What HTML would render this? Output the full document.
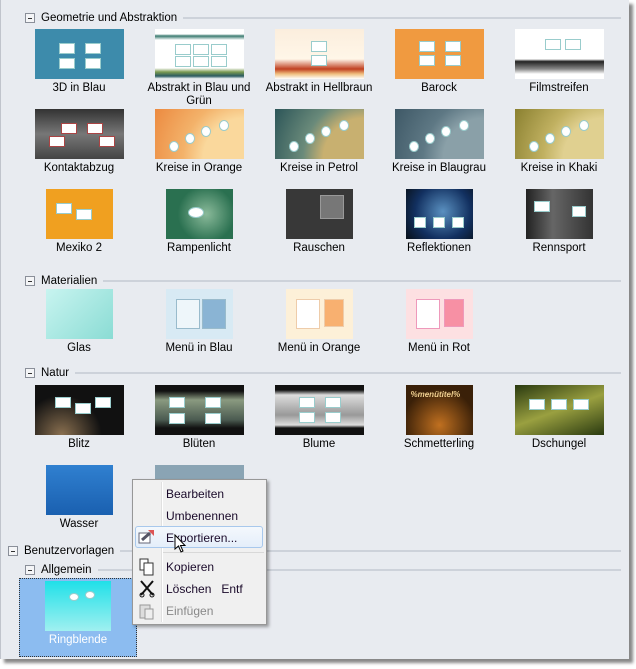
<!DOCTYPE html><html><head><meta charset="utf-8"><style>
body{margin:0;width:636px;height:669px;background:#fff;position:relative;overflow:hidden;font-family:"Liberation Sans",sans-serif;font-size:11.5px;color:#000}
#panel{position:absolute;left:0;top:0;width:628px;height:659px;background:#e8ebf0;box-shadow:4px 4px 3px #888;border-left:1px solid #c0c4cc}
.h{position:absolute;height:14px;display:flex;align-items:center;right:8px}
.h .b{width:8px;height:8px;border:1px solid #8a8f99;background:#f4f5f7;position:relative;margin-right:6px;flex:none}
.h .b:after{content:"";position:absolute;left:2px;top:4px;width:4px;height:1px;background:#333}
.h .l{flex:1;height:2px;background:#cdd2da;margin-left:6px}
.it{position:absolute;width:116px;text-align:center;line-height:13px}
.t{margin:0 auto 3px;height:50px;position:relative;overflow:hidden}
.t i{position:absolute;background:#fff;width:14px;height:9px;border:1px solid #9cc}
#menu{position:absolute;left:131px;top:479px;width:133px;height:144px;background:#f0f0f0;border:1px solid #979797;box-shadow:2px 2px 3px rgba(0,0,0,.35)}
#menu .sep{position:absolute;left:28px;top:2px;bottom:2px;width:1px;background:#e0e0e0;border-right:1px solid #fff}
.mi{position:absolute;left:33px;font-size:12px;color:#1a0a2a}
</style></head><body><div id="panel">
<div class="h" style="left:24px;top:11px"><span class="b"></span>Geometrie und Abstraktion<span class="l"></span></div>
<div class="h" style="left:24px;top:274px"><span class="b"></span>Materialien<span class="l"></span></div>
<div class="h" style="left:24px;top:366px"><span class="b"></span>Natur<span class="l"></span></div>
<div class="h" style="left:7px;top:544px"><span class="b"></span>Benutzervorlagen<span class="l"></span></div>
<div class="h" style="left:24px;top:563px"><span class="b"></span>Allgemein<span class="l"></span></div>

<div class="it" style="left:20px;top:29px"><div class="t" style="width:89px;background:#3d8bab"><i style="left:24px;top:14px"></i><i style="left:50px;top:14px"></i><i style="left:24px;top:29px"></i><i style="left:50px;top:29px"></i></div>3D in Blau</div>
<div class="it" style="left:140px;top:29px"><div class="t" style="width:89px;background:linear-gradient(#fff 0,#fff 10%,#3a7a70 14%,#fff 22%,#fff 78%,#7a9a50 86%,#2a5a60 94%,#fff)"><i style="left:20px;top:15px"></i><i style="left:38px;top:15px"></i><i style="left:56px;top:15px"></i><i style="left:20px;top:27px"></i><i style="left:38px;top:27px"></i><i style="left:56px;top:27px"></i></div>Abstrakt in Blau und Grün</div>
<div class="it" style="left:260px;top:29px"><div class="t" style="width:89px;background:linear-gradient(#fbeedd 0,#fff6e8 60%,#c04020 80%,#f0c080 90%,#fff)"><i style="left:36px;top:12px"></i><i style="left:36px;top:26px"></i></div>Abstrakt in Hellbraun</div>
<div class="it" style="left:380px;top:29px"><div class="t" style="width:89px;background:#f09a40"><i style="left:24px;top:12px"></i><i style="left:50px;top:12px"></i><i style="left:24px;top:26px"></i><i style="left:50px;top:26px"></i></div>Barock</div>
<div class="it" style="left:500px;top:29px"><div class="t" style="width:89px;background:linear-gradient(#fff 0,#fff 60%,#222 65%,#888 80%,#fff 90%)"><i style="left:30px;top:10px"></i><i style="left:50px;top:10px"></i></div>Filmstreifen</div>

<div class="it" style="left:20px;top:109px"><div class="t" style="width:89px;background:linear-gradient(#333,#777 50%,#444)"><i style="left:26px;top:14px;border-color:#a44"></i><i style="left:52px;top:14px;border-color:#a44"></i><i style="left:14px;top:27px;border-color:#a44"></i><i style="left:64px;top:27px;border-color:#a44"></i></div>Kontaktabzug</div>
<div class="it" style="left:140px;top:109px"><div class="t" style="width:89px;background:radial-gradient(circle at 100% 100%,#fad89c 40%,#f3b26a 60%,#ec8a40)"><i style="left:14px;top:32px;border-radius:50%;width:8px"></i><i style="left:30px;top:24px;border-radius:50%;width:8px"></i><i style="left:46px;top:17px;border-radius:50%;width:8px"></i><i style="left:64px;top:11px;border-radius:50%;width:8px"></i></div>Kreise in Orange</div>
<div class="it" style="left:260px;top:109px"><div class="t" style="width:89px;background:radial-gradient(circle at 100% 100%,#c8b070 40%,#6a8a7a 60%,#2c5558)"><i style="left:14px;top:32px;border-radius:50%;width:8px"></i><i style="left:30px;top:24px;border-radius:50%;width:8px"></i><i style="left:46px;top:17px;border-radius:50%;width:8px"></i><i style="left:64px;top:11px;border-radius:50%;width:8px"></i></div>Kreise in Petrol</div>
<div class="it" style="left:380px;top:109px"><div class="t" style="width:89px;background:radial-gradient(circle at 100% 100%,#8aa0a8 40%,#5e7884 60%,#3e5866)"><i style="left:14px;top:32px;border-radius:50%;width:8px"></i><i style="left:30px;top:24px;border-radius:50%;width:8px"></i><i style="left:46px;top:17px;border-radius:50%;width:8px"></i><i style="left:64px;top:11px;border-radius:50%;width:8px"></i></div>Kreise in Blaugrau</div>
<div class="it" style="left:500px;top:109px"><div class="t" style="width:89px;background:radial-gradient(circle at 100% 100%,#e0d090 40%,#c0b060 60%,#8a8030)"><i style="left:14px;top:32px;border-radius:50%;width:8px"></i><i style="left:30px;top:24px;border-radius:50%;width:8px"></i><i style="left:46px;top:17px;border-radius:50%;width:8px"></i><i style="left:64px;top:11px;border-radius:50%;width:8px"></i></div>Kreise in Khaki</div>

<div class="it" style="left:20px;top:189px"><div class="t" style="width:67px;background:#f0a020"><i style="left:10px;top:14px"></i><i style="left:30px;top:20px"></i></div>Mexiko 2</div>
<div class="it" style="left:140px;top:189px"><div class="t" style="width:67px;background:radial-gradient(circle at 60% 50%,#8aba9a,#2a7050 60%)"><i style="left:22px;top:18px;border-radius:50%"></i></div>Rampenlicht</div>
<div class="it" style="left:260px;top:189px"><div class="t" style="width:67px;background:#383838"><i style="left:34px;top:6px;width:22px;height:22px;background:#777;border-color:#999"></i></div>Rauschen</div>
<div class="it" style="left:380px;top:189px"><div class="t" style="width:67px;background:radial-gradient(circle at 55% 45%,#5a90c0,#123060 60%,#081018)"><i style="left:8px;top:28px;width:10px"></i><i style="left:27px;top:28px;width:10px"></i><i style="left:46px;top:28px;width:10px"></i></div>Reflektionen</div>
<div class="it" style="left:500px;top:189px"><div class="t" style="width:67px;background:linear-gradient(90deg,#222,#666 40%,#333)"><i style="left:8px;top:12px"></i><i style="left:46px;top:17px;width:12px"></i></div>Rennsport</div>

<div class="it" style="left:20px;top:289px"><div class="t" style="width:67px;background:linear-gradient(135deg,#c8f4f0,#8adcd4)"></div>Glas</div>
<div class="it" style="left:140px;top:289px"><div class="t" style="width:67px;background:#d8eaf4"><i style="left:10px;top:10px;width:22px;height:28px;background:#eef6fa;border-color:#9bc"></i><i style="left:36px;top:10px;width:22px;height:28px;background:#8ab4d4;border-color:#9bc"></i></div>Menü in Blau</div>
<div class="it" style="left:260px;top:289px"><div class="t" style="width:67px;background:#fdf0d8"><i style="left:10px;top:10px;width:22px;height:28px;background:#fff;border-color:#eca"></i><i style="left:38px;top:10px;width:18px;height:26px;background:#f8b070;border-color:#eca"></i></div>Menü in Orange</div>
<div class="it" style="left:380px;top:289px"><div class="t" style="width:67px;background:#fde0e2"><i style="left:10px;top:10px;width:22px;height:28px;background:#fff;border-color:#e9b"></i><i style="left:38px;top:10px;width:18px;height:26px;background:#f790a4;border-color:#e9b"></i></div>Menü in Rot</div>

<div class="it" style="left:20px;top:385px"><div class="t" style="width:89px;background:radial-gradient(circle at 30% 100%,#8a7050,#111 50%)"><i style="left:20px;top:12px"></i><i style="left:40px;top:18px"></i><i style="left:60px;top:12px"></i></div>Blitz</div>
<div class="it" style="left:140px;top:385px"><div class="t" style="width:89px;background:linear-gradient(#111 12%,#8a9a80 30%,#4a5a50 70%,#111 86%)"><i style="left:14px;top:12px"></i><i style="left:50px;top:12px"></i><i style="left:14px;top:28px"></i><i style="left:50px;top:28px"></i></div>Blüten</div>
<div class="it" style="left:260px;top:385px"><div class="t" style="width:89px;background:linear-gradient(#111 10%,#ddd 20%,#999 60%,#ddd 80%,#111 86%)"><i style="left:24px;top:12px"></i><i style="left:50px;top:12px"></i><i style="left:24px;top:27px"></i><i style="left:50px;top:27px"></i></div>Blume</div>
<div class="it" style="left:380px;top:385px"><div class="t" style="width:67px;background:radial-gradient(circle at 50% 80%,#c07020,#3a2008 70%)"><span style="position:absolute;left:5px;top:3px;font-size:8px;font-weight:bold;font-style:italic;color:#f0d090">%menütitel%</span></div>Schmetterling</div>
<div class="it" style="left:500px;top:385px"><div class="t" style="width:89px;background:linear-gradient(160deg,#2a3a10,#9aa040 50%,#2a3a10)"><i style="left:14px;top:14px"></i><i style="left:36px;top:14px"></i><i style="left:58px;top:14px"></i></div>Dschungel</div>

<div class="it" style="left:20px;top:465px"><div class="t" style="width:67px;background:linear-gradient(#3080d0,#1a60b0)"></div>Wasser</div>
<div class="it" style="left:140px;top:465px"><div class="t" style="width:89px;background:#8aa4b4"></div></div>

<div style="position:absolute;left:18px;top:578px;width:118px;height:79px;background:#8cbcf0;border:1px dotted #333;box-sizing:border-box"></div>
<div class="it" style="left:19px;top:581px;color:#fff"><div class="t" style="width:66px;background:linear-gradient(#20e0e8,#a0f0f0)"><i style="left:24px;top:12px;border-radius:50%;width:8px;height:6px"></i><i style="left:40px;top:10px;border-radius:50%;width:8px;height:6px"></i></div>Ringblende</div>

<div id="menu"><div class="sep"></div>
<div class="mi" style="top:7px">Bearbeiten</div>
<div class="mi" style="top:29px">Umbenennen</div>
<div style="position:absolute;left:2px;top:46px;width:126px;height:20px;border:1px solid #a8c8ec;border-radius:3px;background:linear-gradient(#f4f8fc,#e4eefa)"></div>
<div class="mi" style="top:51px">Exportieren...</div>
<div style="position:absolute;left:30px;right:2px;top:72px;height:1px;background:#d8d8d8"></div>
<div class="mi" style="top:80px">Kopieren</div>
<div class="mi" style="top:102px">Löschen&nbsp;&nbsp;&nbsp;Entf</div>
<div class="mi" style="top:124px;color:#888">Einfügen</div>
<svg style="position:absolute;left:5px;top:49px" width="18" height="16"><rect x="1" y="4" width="11" height="10" fill="#fff" stroke="#667"/><path d="M4 11 L12 4" stroke="#556" stroke-width="3"/><path d="M10 1 L16 1 L16 7 Z" fill="#d55"/></svg>
<svg style="position:absolute;left:6px;top:78px" width="16" height="18"><rect x="1" y="1" width="8" height="11" fill="#fff" stroke="#333"/><rect x="5" y="5" width="9" height="12" fill="#fff" stroke="#333"/></svg>
<svg style="position:absolute;left:6px;top:100px" width="16" height="18"><path d="M2 1 L14 15 M14 1 L2 15" stroke="#111" stroke-width="2"/><circle cx="3" cy="15" r="2" fill="none" stroke="#111"/><circle cx="13" cy="15" r="2" fill="none" stroke="#111"/></svg>
<svg style="position:absolute;left:6px;top:122px" width="16" height="18"><rect x="1" y="3" width="10" height="13" fill="#ddd" stroke="#999"/><rect x="6" y="7" width="8" height="10" fill="#eee" stroke="#999"/></svg>
</div>
<svg style="position:absolute;left:173px;top:534px" width="14" height="20"><path d="M1 1 L1 15 L4.5 12 L7 18 L9 17 L6.5 11.5 L11 11.5 Z" fill="#fff" stroke="#000"/></svg>
</div></body></html>
